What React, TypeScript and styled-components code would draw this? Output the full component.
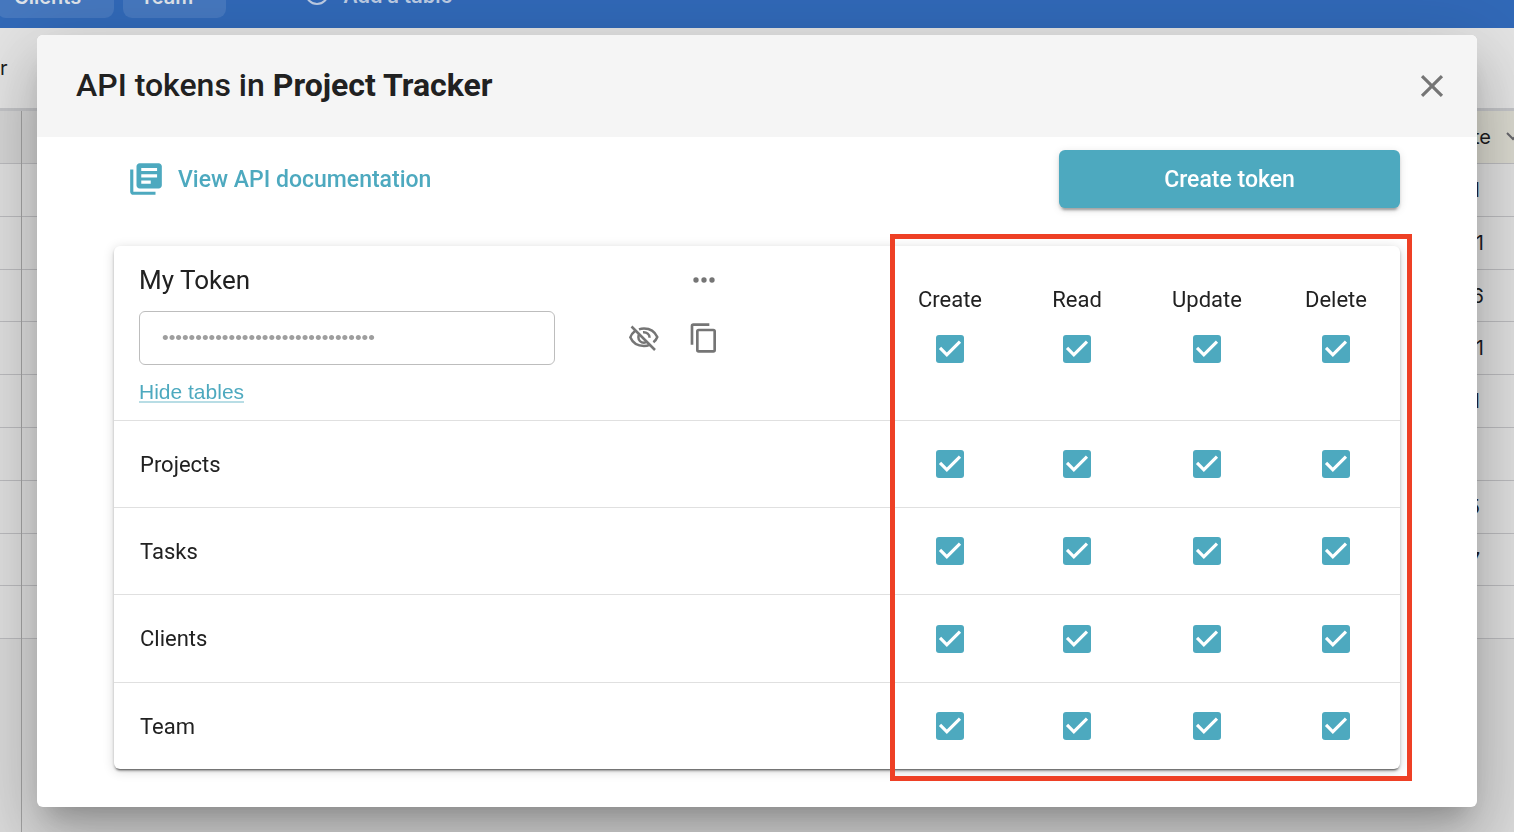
import React from 'react';
import styled, { createGlobalStyle } from 'styled-components';

const teal = '#4da9bf';

const GlobalStyle = createGlobalStyle`
  *, *::before, *::after { box-sizing: border-box; }
  body {
    margin: 0;
    color: #212121;
    font-family: Roboto, "Liberation Sans", sans-serif;
  }
  button, input { font: inherit; color: inherit; margin: 0; }
  button { border: 0; padding: 0; background: none; cursor: pointer; }
`;

/* ---------- base view behind the dialog ---------- */

const Workspace = styled.div`
  height: 100vh;
  display: flex;
  flex-direction: column;
  overflow: hidden;
  background: #dadada;
  color: #1c1c1e;
  font-family: Inter, "Liberation Sans", sans-serif;
  font-size: 20px;
`;

const TopBar = styled.nav`
  flex: none;
  height: 28px;
  display: flex;
  align-items: flex-end;
  gap: 9px;
  padding-bottom: 10px;
  overflow: hidden;
  background: #3169b8;
`;

const TableTab = styled.button<{ $first?: boolean }>`
  height: 44px;
  display: flex;
  align-items: flex-end;
  margin-left: ${(p) => (p.$first ? '-3px' : '0')};
  padding: 0 33px 11px 17px;
  border-radius: 9px;
  background: rgba(255, 255, 255, 0.1);
  color: #dfe3ea;
  font-weight: 600;
  line-height: 20px;
`;

const AddTable = styled.button`
  height: 44px;
  display: flex;
  align-items: flex-end;
  gap: 13px;
  margin-left: 69px;
  padding-bottom: 12px;
  color: #bccbe3;
  font-weight: 600;
  line-height: 20px;
`;

const ViewBar = styled.header`
  flex: none;
  height: 83px;
  display: flex;
  align-items: center;
  border-bottom: 3px solid #c4c5c8;
  background: #e4e4e4;
`;

const Sheet = styled.div`
  flex: 1;
  display: flex;
  justify-content: space-between;
`;

const Frozen = styled.div`
  width: 22px;
  border-right: 1px solid #a4a4a4;
`;

const SheetColumn = styled.div<{ $grow?: boolean }>`
  flex: ${(p) => (p.$grow ? '1' : 'none')};
  min-width: ${(p) => (p.$grow ? '0' : '80px')};
`;

const Cell = styled.div`
  height: 53px;
  display: flex;
  align-items: center;
  justify-content: flex-end;
  border-bottom: 1px solid #bcbcbf;
  background: #e0e0e0;

  &:nth-child(5n + 4) { height: 52px; }
`;

const DateCell = styled(Cell)<{ $short?: boolean }>`
  padding-right: ${(p) => (p.$short ? '34px' : '30px')};
`;

const HeadCell = styled(Cell)<{ $sorted?: boolean }>`
  gap: 15px;
  background: ${(p) => (p.$sorted ? '#dad9cf' : '#d5d5d5')};
`;

/* ---------- dialog ---------- */

const Overlay = styled.div`
  position: fixed;
  inset: 0;
  padding: 35px 37px 25px;
`;

const Dialog = styled.section`
  padding-bottom: 38px;
  border-radius: 6px;
  background: #fff;
  box-shadow:
    0 18px 24px -11px rgba(0, 0, 0, 0.2),
    0 38px 61px 5px rgba(0, 0, 0, 0.14),
    0 14px 74px 13px rgba(0, 0, 0, 0.12);
`;

const DialogHeader = styled.header`
  height: 102px;
  display: flex;
  align-items: center;
  justify-content: space-between;
  padding: 0 26px 0 39px;
  border-radius: 6px 6px 0 0;
  background: #f5f5f5;
`;

const Title = styled.h1`
  margin: 0 0 2px;
  font-size: 32px;
  font-weight: 500;
  line-height: 40px;

  strong { font-weight: 700; }
`;

const IconButton = styled.button`
  display: flex;
  color: #757575;
`;

const DialogBody = styled.div`
  padding: 13px 77px 0;
`;

const Actions = styled.div`
  display: flex;
  align-items: center;
  justify-content: space-between;
  margin-bottom: 38px;
`;

const DocsLink = styled.a`
  display: flex;
  align-items: center;
  gap: 13px;
  padding-left: 13px;
  color: ${teal};
  font-size: 23px;
  font-weight: 500;
  text-decoration: none;
`;

const CreateButton = styled.button`
  width: 341px;
  height: 58px;
  border-radius: 6px;
  background: ${teal};
  color: #fff;
  font-size: 23px;
  font-weight: 500;
  box-shadow:
    0 5px 2px -3px rgba(0, 0, 0, 0.2),
    0 3px 3px 0 rgba(0, 0, 0, 0.14),
    0 2px 8px 0 rgba(0, 0, 0, 0.12);
`;

const TokenCard = styled.div`
  position: relative;
  border-radius: 6px;
  background: #fff;
  box-shadow:
    0 3px 2px -2px rgba(0, 0, 0, 0.5),
    0 2px 3px 0 rgba(0, 0, 0, 0.24),
    0 2px 12px 0 rgba(0, 0, 0, 0.16);
`;

const Highlight = styled.div`
  position: absolute;
  inset: -12px -12px -12px auto;
  width: 522px;
  border: 5px solid #ee4025;
  pointer-events: none;
`;

const PermissionTable = styled.table`
  width: 100%;
  table-layout: fixed;
  border-spacing: 0;
  font-size: 22px;

  th, td {
    padding: 0;
    border-bottom: 1px solid #e0e0e0;
    font-weight: 400;
  }
  tbody tr { height: 87px; }
  tbody tr:nth-child(3) { height: 88px; }
  tbody tr:last-child { height: 86px; }
  tbody tr:last-child > * { border-bottom: 0; }
`;

const Column = styled.col<{ $width: number }>`
  width: ${(p) => p.$width}px;
`;

const TokenCell = styled.th`
  height: 175px;
  text-align: left;
  vertical-align: top;
`;

const TokenLayout = styled.div`
  display: grid;
  grid-template-columns: 416px 105px 32px;
  column-gap: 14px;
  align-items: center;
  padding: 18px 0 0 25px;
`;

const TokenName = styled.h2`
  grid-column: 1 / 3;
  margin: 0;
  font-size: 26px;
  font-weight: 400;
  line-height: 32px;
`;

const TokenValue = styled.input`
  width: 416px;
  height: 54px;
  margin: 15px 0;
  padding: 0 22px;
  border: 1px solid #bdbdbd;
  border-radius: 6px;
  background: #fff;
  color: #9e9e9e;
  font-family: "Liberation Sans", sans-serif;
  font-size: 19px;
  outline: 0;
`;

const TokenTools = styled.div`
  grid-column: 2 / 4;
  display: flex;
  justify-content: flex-end;
  gap: 28px;
`;

const HideLink = styled.a`
  justify-self: start;
  margin-top: 3px;
  border-bottom: 2px solid #b8dde5;
  color: ${teal};
  font-family: "Liberation Sans", sans-serif;
  font-size: 21px;
  line-height: 18px;
  text-decoration: none;
`;

const PermissionHead = styled.th`
  vertical-align: top;
`;

const PermissionLabel = styled.label`
  display: flex;
  flex-direction: column;
  align-items: center;
  gap: 16px;
  padding-top: 40px;
  line-height: 28px;
`;

const TableName = styled.th`
  text-align: left;
`;

const TableLabel = styled.span`
  padding-left: 26px;
`;

const CheckCell = styled.td`
  text-align: center;
`;

const CheckWrap = styled.span`
  display: inline-grid;
  place-items: center;
  width: 38px;
  height: 38px;
  vertical-align: middle;

  > * { grid-area: 1 / 1; }
  svg { pointer-events: none; }
`;

const CheckInput = styled.input`
  appearance: none;
  width: 28px;
  height: 28px;
  border-radius: 3px;
  background: ${teal};
`;

const Icon = ({ path, size }: { path: string; size: number }) => (
  <svg width={size} height={size} viewBox="0 0 24 24" fill="currentColor" aria-hidden="true">
    <path d={path} />
  </svg>
);

const icons = {
  close:
    'M19 6.41L17.59 5L12 10.59L6.41 5L5 6.41L10.59 12L5 17.59L6.41 19L12 13.41L17.59 19L19 17.59L13.41 12L19 6.41Z',
  docs:
    'M4 6H2v14c0 1.1.9 2 2 2h14v-2H4V6zm16-4H8c-1.1 0-2 .9-2 2v12c0 1.1.9 2 2 2h12c1.1 0 2-.9 2-2V4c0-1.1-.9-2-2-2zm-1 9H9V9h10v2zm-4 4H9v-2h6v2zm4-8H9V5h10v2z',
  dots:
    'M16 12a2 2 0 0 1 2-2a2 2 0 0 1 2 2a2 2 0 0 1-2 2a2 2 0 0 1-2-2m-6 0a2 2 0 0 1 2-2a2 2 0 0 1 2 2a2 2 0 0 1-2 2a2 2 0 0 1-2-2m-6 0a2 2 0 0 1 2-2a2 2 0 0 1 2 2a2 2 0 0 1-2 2a2 2 0 0 1-2-2z',
  copy:
    'M19,21H8V7H19M19,5H8A2,2 0 0,0 6,7V21A2,2 0 0,0 8,23H19A2,2 0 0,0 21,21V7A2,2 0 0,0 19,5M16,1H4A2,2 0 0,0 2,3V17H4V3H16V1Z',
  check: 'M10,17L5,12L6.41,10.58L10,14.17L17.59,6.58L19,8Z',
};

/* The eye is wider than tall, with two arcs around the pupil and a slash across. */
const EyeOffIcon = () => (
  <svg width={32} height={32} viewBox="0 0 32 32" fill="none" stroke="currentColor" strokeWidth={2.5} aria-hidden="true">
    <path d="M11 7.400C12.500 6.800 14.200 6.500 16 6.500C22 6.500 27 10 29.300 15C28.500 17.200 27.200 18.800 25.400 20.200" />
    <path d="M7 9C5 10.500 3.300 12.500 2.300 15.300C4.500 20.500 9.700 24 16 24C18 24 20 23.600 21.700 22.900" />
    <path d="M11.700 11.500C10.800 12.500 10.400 13.700 10.400 15.300C10.400 18.400 12.900 20.700 16 20.700C17.100 20.700 18.100 20.400 19 19.800" />
    <path d="M15 10.300C18.800 10 21.600 12.400 21.600 15.700" />
    <path d="M3.500 4.500L27 28" />
  </svg>
);

const Checkbox = ({ label, id }: { label?: string; id?: string }) => (
  <CheckWrap>
    <CheckInput type="checkbox" defaultChecked aria-label={label} id={id} />
    <svg width={38} height={38} viewBox="0 0 24 24" fill="#fff" aria-hidden="true">
      <path d={icons.check} />
    </svg>
  </CheckWrap>
);

const permissions = ['Create', 'Read', 'Update', 'Delete'];
const columnWidths = [124, 130, 130, 128];
const tables = ['Projects', 'Tasks', 'Clients', 'Team'];

const dateCells = [
  { text: '1', short: true },
  { text: '1' },
  { text: '6' },
  { text: '1' },
  { text: '1', short: true },
  { text: '' },
  { text: '5', short: true },
  { text: '7', short: true },
  { text: '' },
];

const Background = () => (
  <Workspace>
    <TopBar>
      <TableTab $first>Clients</TableTab>
      <TableTab>Team</TableTab>
      <AddTable>
        <svg width={26} height={26} viewBox="0 0 26 26" fill="none" stroke="currentColor" strokeWidth={2} aria-hidden="true">
          <circle cx={13} cy={13} r={11} />
          <path d="M13 8v10M8 13h10" />
        </svg>
        Add a table
      </AddTable>
    </TopBar>
    <ViewBar>r</ViewBar>
    <Sheet>
      <Frozen>
        <HeadCell />
        {dateCells.map((_, i) => <Cell key={i} />)}
      </Frozen>
      <SheetColumn $grow>
        <HeadCell />
        {dateCells.map((_, i) => <Cell key={i} />)}
      </SheetColumn>
      <SheetColumn>
        <HeadCell $sorted>
          te
          <svg width={8} height={12} viewBox="0 0 8 12" fill="none" stroke="#66666b" strokeWidth={2} aria-hidden="true">
            <path d="M1 2l6 6l6-6" />
          </svg>
        </HeadCell>
        {dateCells.map((c, i) => <DateCell key={i} $short={c.short}>{c.text}</DateCell>)}
      </SheetColumn>
    </Sheet>
  </Workspace>
);

export default function App() {
  return (
    <>
      <GlobalStyle />
      <Background />
      <Overlay>
        <Dialog role="dialog" aria-labelledby="dialog-title">
          <DialogHeader>
            <Title id="dialog-title">API tokens in <strong>Project Tracker</strong></Title>
            <IconButton aria-label="Close"><Icon path={icons.close} size={38} /></IconButton>
          </DialogHeader>
          <DialogBody>
            <Actions>
              <DocsLink href="#docs">
                <Icon path={icons.docs} size={38} />
                View API documentation
              </DocsLink>
              <CreateButton>Create token</CreateButton>
            </Actions>
            <TokenCard>
              <PermissionTable>
                <colgroup>
                  <col />
                  {columnWidths.map((w, i) => <Column key={i} $width={w} />)}
                </colgroup>
                <thead>
                  <tr>
                    <TokenCell scope="col">
                      <TokenLayout>
                        <TokenName>My Token</TokenName>
                        <IconButton aria-label="Token options"><Icon path={icons.dots} size={32} /></IconButton>
                        <TokenValue
                          type="password"
                          aria-label="Token"
                          readOnly
                          value="abcdefghijklmnopqrstuvwxyz012345"
                        />
                        <TokenTools>
                          <IconButton aria-label="Show token"><EyeOffIcon /></IconButton>
                          <IconButton aria-label="Copy token"><Icon path={icons.copy} size={32} /></IconButton>
                        </TokenTools>
                        <HideLink href="#tables">Hide tables</HideLink>
                      </TokenLayout>
                    </TokenCell>
                    {permissions.map((p) => (
                      <PermissionHead key={p} scope="col">
                        <PermissionLabel htmlFor={`all-${p}`}>
                          {p}
                          <Checkbox id={`all-${p}`} />
                        </PermissionLabel>
                      </PermissionHead>
                    ))}
                  </tr>
                </thead>
                <tbody>
                  {tables.map((t) => (
                    <tr key={t}>
                      <TableName scope="row"><TableLabel>{t}</TableLabel></TableName>
                      {permissions.map((p) => (
                        <CheckCell key={p}><Checkbox label={`${p} ${t}`} /></CheckCell>
                      ))}
                    </tr>
                  ))}
                </tbody>
              </PermissionTable>
              <Highlight />
            </TokenCard>
          </DialogBody>
        </Dialog>
      </Overlay>
    </>
  );
}
